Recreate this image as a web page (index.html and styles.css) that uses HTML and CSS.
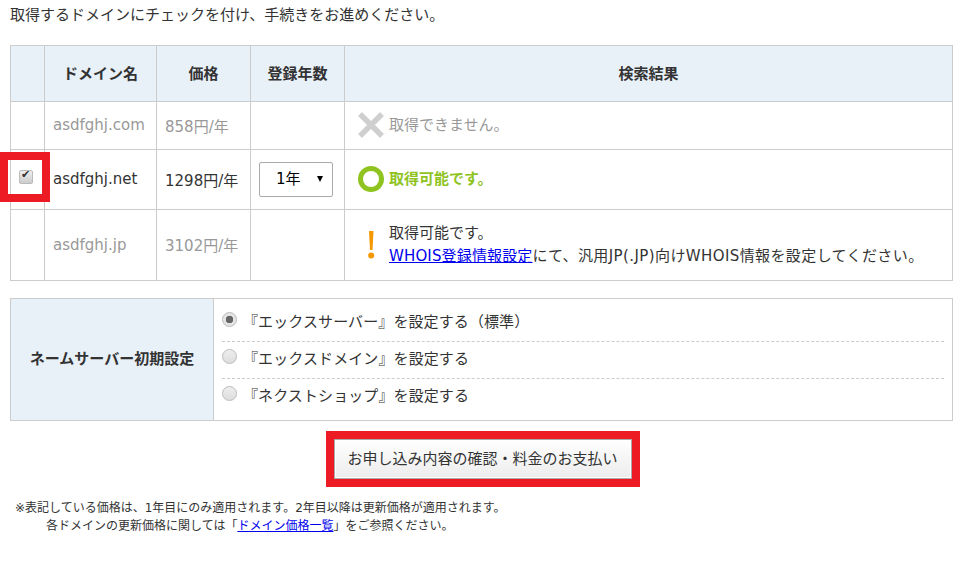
FILE: index.html
```html
<!DOCTYPE html>
<html lang="ja">
<head>
    <meta charset="UTF-8">
    <title>ドメイン取得</title>
    <link rel="stylesheet" href="styles.css">
</head>
<body>
    <div class="container">
        <p class="lead">取得するドメインにチェックを付け、手続きをお進めください。</p>

        <!-- Domain results -->
        <table class="domain-table">
            <tr class="head-row">
                <th class="col-check"></th>
                <th class="col-name">ドメイン名</th>
                <th class="col-price">価格</th>
                <th class="col-year">登録年数</th>
                <th>検索結果</th>
            </tr>
            <tr class="row-com muted">
                <td></td>
                <td>asdfghj.com</td>
                <td>858円/年</td>
                <td></td>
                <td>
                    <div class="result">
                        <svg class="icon" width="26" height="26" viewBox="0 0 26 26"><path d="M2 2L24 24M24 2L2 24" stroke="#cfcfcf" stroke-width="5.5" fill="none"/></svg>
                        <span>取得できません。</span>
                    </div>
                </td>
            </tr>
            <tr class="row-net">
                <td class="cell-check"><input type="checkbox" class="check" checked></td>
                <td>asdfghj.net</td>
                <td>1298円/年</td>
                <td>
                    <span class="select-wrap">
                        <select class="year-select"><option>1年</option></select>
                    </span>
                </td>
                <td>
                    <div class="result ok">
                        <svg class="icon" width="26" height="26" viewBox="0 0 26 26"><circle cx="13" cy="13" r="10.5" stroke="#8fc31f" stroke-width="5" fill="none"/></svg>
                        <span>取得可能です。</span>
                    </div>
                </td>
            </tr>
            <tr class="row-jp">
                <td></td>
                <td class="dim">asdfghj.jp</td>
                <td class="dim">3102円/年</td>
                <td></td>
                <td>
                    <div class="result">
                        <svg class="icon" width="26" height="30" viewBox="0 0 26 30"><path d="M11 1H15.500L14.500 20H12Z" fill="#f39800"/><circle cx="13.200" cy="25.500" r="3" fill="#f39800"/></svg>
                        <span>取得可能です。<br><a href="#" class="whois-link">WHOIS登録情報設定</a><span class="whois-note">にて、汎用JP(.JP)向けWHOIS情報を設定してください。</span></span>
                    </div>
                </td>
            </tr>
        </table>

        <!-- Name server -->
        <div class="ns-box">
            <div class="ns-title">ネームサーバー初期設定</div>
            <div class="ns-options">
                <label class="ns-option"><input type="radio" class="radio" name="ns" checked>『エックスサーバー』を設定する（標準）</label>
                <label class="ns-option"><input type="radio" class="radio" name="ns">『エックスドメイン』を設定する</label>
                <label class="ns-option"><input type="radio" class="radio" name="ns">『ネクストショップ』を設定する</label>
            </div>
        </div>

        <div class="submit-row">
            <button type="button" class="submit-btn">お申し込み内容の確認・料金のお支払い</button>
        </div>

        <div class="notes">
            <p>※表記している価格は、1年目にのみ適用されます。2年目以降は更新価格が適用されます。</p>
            <p class="indent">各ドメインの更新価格に関しては「<a href="#">ドメイン価格一覧</a>」をご参照ください。</p>
        </div>
    </div>

    <!-- Red annotation frame around the checkbox -->
    <div class="mark mark-check"></div>
</body>
</html>
```

FILE: styles.css
```css
body {
    margin: 0;
    background: #fff;
    color: #333;
    font-family: "DejaVu Sans", "Noto Sans CJK JP", sans-serif;
    font-size: 15px;
}

.container {
    width: 943px;
    margin-left: 10px;
}

.lead {
    margin: 0;
    height: 45px;
    line-height: 30px;
}

.domain-table {
    width: 943px;
    border-collapse: collapse;
    table-layout: fixed;
}

.domain-table th,
.domain-table td {
    border: 1px solid #ccc;
    padding: 0;
}

.domain-table th {
    background: #e8f0f8;
    font-weight: bold;
    text-align: center;
    padding-bottom: 2px;
}

.domain-table td {
    padding: 0 0 1px 8px;
}

.col-check { width: 33px; }
.col-name { width: 111px; }
.col-price { width: 93px; }
.col-year { width: 93px; }

.head-row { height: 56px; }
.row-com { height: 48px; }
.row-net { height: 60px; }
.row-jp { height: 71px; }

.muted,
.dim {
    color: #999;
}

.result {
    display: flex;
    align-items: center;
    gap: 5px;
    padding-left: 5px;
    line-height: 23px;
}

.result.ok {
    color: #8fc31f;
    font-weight: bold;
}

.whois-link {
    letter-spacing: 0.150px;
}

.whois-note {
    letter-spacing: 0.400px;
}

.domain-table td.cell-check {
    padding: 0;
    text-align: center;
}

.check {
    appearance: none;
    position: relative;
    display: inline-block;
    width: 14px;
    height: 14px;
    margin: 0 4px 5px 0;
    vertical-align: middle;
    border: 1px solid #bbb;
    border-radius: 2px;
    background: linear-gradient(#eee, #ccc);
}

.check::after {
    content: "✔";
    position: absolute;
    left: 1px;
    top: -3px;
    font-size: 11px;
    color: #333;
}

.select-wrap {
    position: relative;
    display: inline-block;
}

.select-wrap::after {
    content: "";
    position: absolute;
    right: 10px;
    top: 14px;
    border-left: 3.500px solid transparent;
    border-right: 3.500px solid transparent;
    border-top: 6px solid #000;
}

.year-select {
    appearance: none;
    display: block;
    width: 74px;
    height: 35px;
    padding: 0 0 0 16px;
    border: 1px solid #aaa;
    border-radius: 2px;
    background: #fff;
    color: #000;
    font-family: inherit;
    font-size: 15px;
}

a {
    color: #00e;
}

.ns-box {
    display: flex;
    margin-top: 17px;
    height: 123px;
    border: 1px solid #ccc;
    box-sizing: border-box;
}

.ns-title {
    flex: none;
    display: flex;
    align-items: center;
    justify-content: center;
    background: #e8f0f8;
    border-right: 1px solid #ccc;
    font-weight: bold;
    padding-bottom: 4px;
    box-sizing: border-box;
    width: 203px;
}

.ns-options {
    flex: 1;
    padding: 6px 8px 0;
}

.ns-option {
    display: flex;
    align-items: center;
    line-height: 23px;
    padding: 6px 0 7px;
    letter-spacing: 0.100px;
    border-bottom: 1px dashed #ccc;
}

.ns-option:last-child {
    border-bottom: none;
}

.radio {
    appearance: none;
    flex: none;
    width: 15px;
    height: 15px;
    margin: 0 6px 6px 0;
    border: 1px solid #bbb;
    border-radius: 50%;
    background: linear-gradient(#eee, #ddd);
}

.radio:checked {
    background: radial-gradient(circle, #666 0 3.500px, #e4e4e4 4px);
}

.submit-row {
    margin-top: 10px;
    padding-left: 2px;
    display: flex;
    justify-content: center;
}

.submit-btn {
    width: 298px;
    height: 37px;
    padding: 0 0 3px;
    border: 8px solid #ed1c24;
    box-sizing: content-box;
    outline: none;
    background: linear-gradient(#fff, #ececec);
    box-shadow: inset 0 0 0 1px #aaa, inset 0 0 0 2px #fff;
    color: #333;
    font-family: inherit;
    font-size: 15px;
}

.notes {
    margin-top: 12px;
    padding-left: 5px;
    font-size: 12px;
    line-height: 18px;
}

.notes p {
    margin: 0;
}

.notes .indent {
    padding-left: 31px;
}

.mark {
    position: absolute;
    border: 8px solid #ed1c24;
}

.mark-check {
    left: 0;
    top: 152px;
    width: 34px;
    height: 34px;
}
```
